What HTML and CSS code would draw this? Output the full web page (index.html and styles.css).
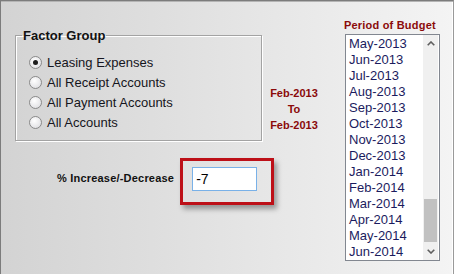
FILE: index.html
```html
<!DOCTYPE html>
<html lang="en">
<head>
    <meta charset="UTF-8">
    <title>Budget Factor</title>
    <link rel="stylesheet" href="styles.css">
</head>
<body>
    <div class="panel">
        <div class="left">
            <fieldset class="group">
                <legend>Factor Group</legend>
                <label class="opt"><span class="radio checked"></span>Leasing Expenses</label>
                <label class="opt"><span class="radio"></span>All Receipt Accounts</label>
                <label class="opt"><span class="radio"></span>All Payment Accounts</label>
                <label class="opt"><span class="radio"></span>All Accounts</label>
            </fieldset>

            <div class="pct">
                <span class="pct-label">% Increase/-Decrease</span>
                <div class="highlight">
                    <input class="pct-input" type="text" value="-7">
                </div>
            </div>
        </div>

        <div class="dates">Feb-2013<br>To<br>Feb-2013</div>

        <div class="budget">
            <div class="budget-title">Period of Budget</div>
            <div class="listbox">
                <ul class="items">
                    <li>May-2013</li>
                    <li>Jun-2013</li>
                    <li>Jul-2013</li>
                    <li>Aug-2013</li>
                    <li>Sep-2013</li>
                    <li>Oct-2013</li>
                    <li>Nov-2013</li>
                    <li>Dec-2013</li>
                    <li>Jan-2014</li>
                    <li>Feb-2014</li>
                    <li>Mar-2014</li>
                    <li>Apr-2014</li>
                    <li>May-2014</li>
                    <li>Jun-2014</li>
                </ul>
                <div class="scrollbar">
                    <div class="arrow">
                        <svg width="8" height="5" viewBox="0 0 8 5"><path d="M0.7 4.3 L4 1 L7.3 4.3" fill="none" stroke="#5f5f5f" stroke-width="1.6"/></svg>
                    </div>
                    <div class="thumb"></div>
                    <div class="arrow">
                        <svg width="8" height="5" viewBox="0 0 8 5"><path d="M0.7 0.7 L4 4 L7.3 0.7" fill="none" stroke="#5f5f5f" stroke-width="1.6"/></svg>
                    </div>
                </div>
            </div>
        </div>
    </div>
</body>
</html>
```

FILE: styles.css
```css
body {
    margin: 0;
    font-family: "Liberation Sans", Arial, sans-serif;
}

.panel {
    width: 454px;
    height: 274px;
    box-sizing: border-box;
    display: flex;
    align-items: flex-start;
    border-top: 1px solid #7c7c7c;
    border-left: 1px solid #7c7c7c;
    border-right: 1px solid #9a9a9a;
    box-shadow: inset 0 1px 0 #b4b4b4, inset -1px 0 0 #fff;
    background: linear-gradient(to right, #d3d3d3, #f4f4f4);
}

/* left side: radio group + percentage */
.left {
    width: 247px;
    flex-shrink: 0;
    margin-left: 14px;
    margin-top: 27px;
}

.group {
    margin: 0;
    padding: 9px 0 8px 13px;
    border: 1px solid #a3a3a3;
    box-shadow: 1px 1px 0 #fff, inset 1px 1px 0 #fff;
}

.group legend {
    margin-left: -7px;
    padding: 0 1px;
    font-size: 13px;
    line-height: 15px;
    font-weight: bold;
    color: #111;
}

.opt {
    display: flex;
    align-items: center;
    gap: 5px;
    height: 20px;
    font-size: 13px;
    color: #151520;
}

.radio {
    width: 13px;
    height: 13px;
    box-sizing: border-box;
    border: 1px solid #8a8a8a;
    border-radius: 50%;
    background: radial-gradient(circle at 40% 35%, #ffffff, #d8d8dc);
    display: flex;
    align-items: center;
    justify-content: center;
}

.radio.checked::after {
    content: "";
    width: 5px;
    height: 5px;
    border-radius: 50%;
    background: #1c1c1c;
}

.pct {
    display: flex;
    align-items: flex-start;
    gap: 6px;
    margin-top: 17px;
    padding-left: 42px;
}

.pct-label {
    margin-top: 13px;
    font-size: 11px;
    line-height: 14px;
    font-weight: bold;
    letter-spacing: 0.2px;
    color: #111;
    white-space: nowrap;
}

.highlight {
    border: 3px solid #bd1018;
    padding: 6px 14px 11px 9px;
    box-shadow: 3px 4px 5px rgba(0, 0, 0, 0.35);
}

.pct-input {
    display: block;
    width: 65px;
    height: 24px;
    box-sizing: border-box;
    margin: 0;
    padding: 0 3px;
    border: 1px solid #79b1e8;
    background: #fff;
    font-family: "Liberation Sans", Arial, sans-serif;
    font-size: 14px;
    color: #000;
    outline: none;
}

/* date range */
.dates {
    width: 64px;
    flex-shrink: 0;
    margin-top: 84px;
    text-align: center;
    font-size: 11px;
    line-height: 16px;
    font-weight: bold;
    color: #8b0a0a;
}

/* period list */
.budget {
    margin-left: 18px;
    margin-top: 16px;
}

.budget-title {
    font-size: 11px;
    line-height: 17px;
    font-weight: bold;
    letter-spacing: 0.2px;
    color: #8b0a0a;
    white-space: nowrap;
}

.listbox {
    display: flex;
    width: 95px;
    height: 227px;
    box-sizing: border-box;
    margin-left: 1px;
    border: 1px solid #828790;
    background: #fff;
}

.items {
    flex: 1;
    margin: 0;
    padding: 1px 0 0 3px;
    list-style: none;
}

.items li {
    font-size: 13px;
    line-height: 16px;
    color: #1b1b5e;
    white-space: nowrap;
}

.scrollbar {
    width: 15px;
    margin-right: 1px;
    display: flex;
    flex-direction: column;
    background: #f0f0f0;
}

.arrow {
    height: 17px;
    display: flex;
    align-items: center;
    justify-content: center;
}

.thumb {
    height: 43px;
    margin: auto 1px 1px;
    background: #c1c1c1;
}
```
